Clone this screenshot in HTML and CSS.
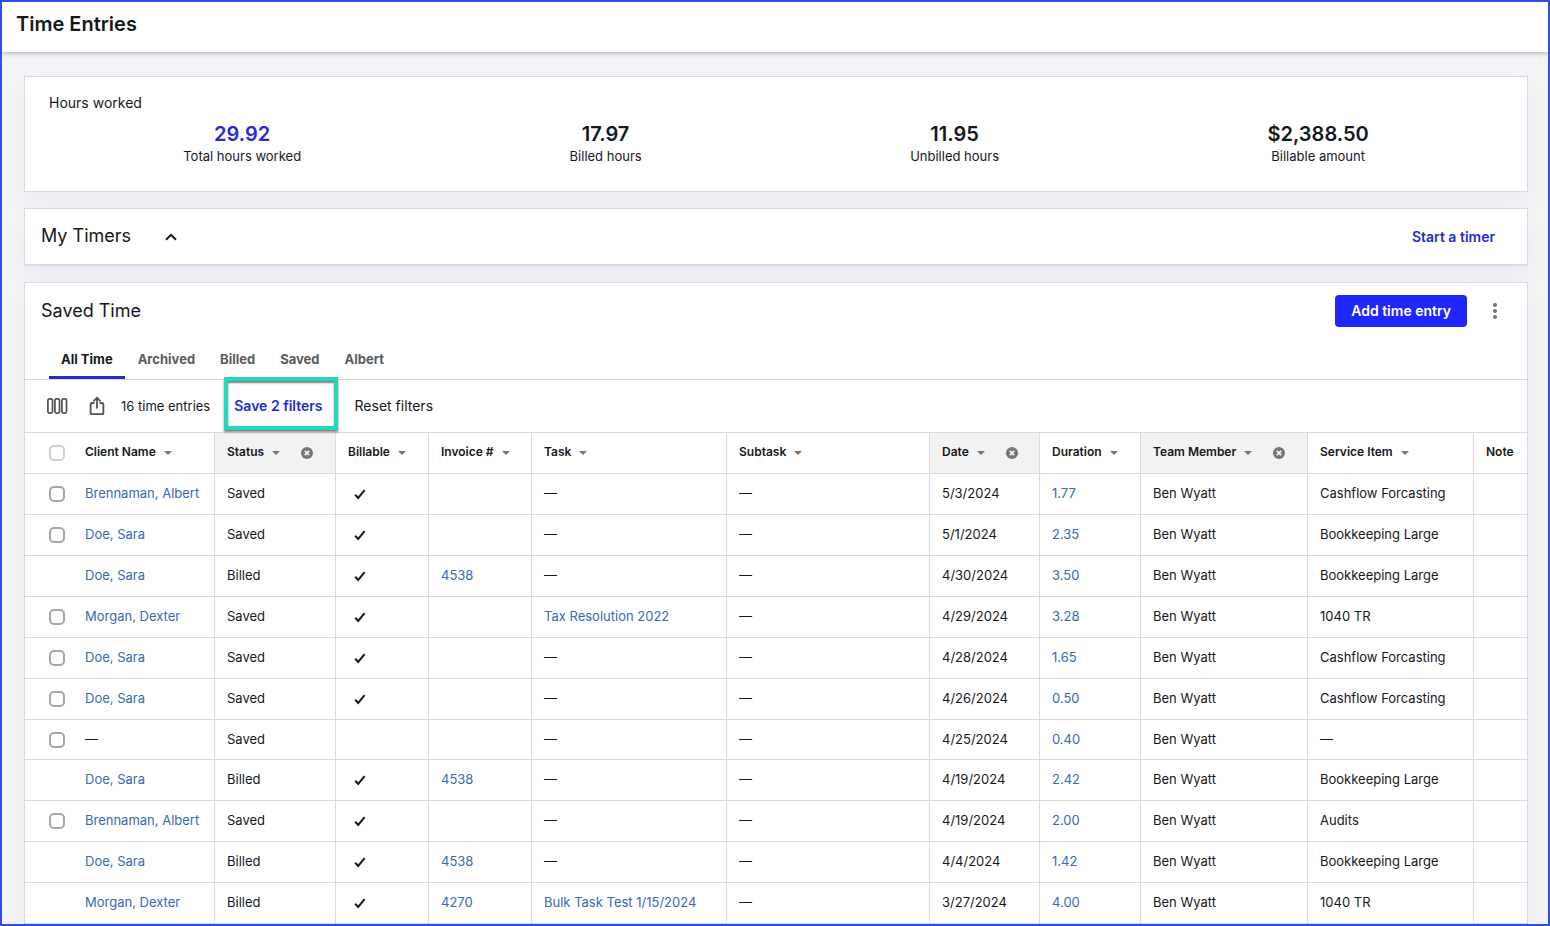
FILE: index.html
```html
<!DOCTYPE html>
<html lang="en">
<head>
<meta charset="utf-8">
<title>Time Entries</title>
<link rel="stylesheet" href="styles.css">
</head>
<body>
<svg class="sprite" aria-hidden="true">
  <symbol id="check" viewBox="0 0 12 12"><path d="M1.2 6.8 4.2 9.900 10.600 2.200" fill="none" stroke="currentColor" stroke-width="2"/></symbol>
  <symbol id="caret" viewBox="0 0 8 4"><path d="M0 0h8L4 4z" fill="currentColor"/></symbol>
  <symbol id="clear" viewBox="0 0 12 12"><circle cx="6" cy="6" r="6" fill="currentColor"/><path d="m3.8 3.8 4.4 4.4m0-4.4L3.8 8.2" stroke="#f2f2f2" stroke-width="1.8"/></symbol>
</svg>
<div class="app">
  <header class="topbar"><h1>Time Entries</h1></header>
  <main class="content">
    <section class="card summary">
      <h2 class="summary-title">Hours worked</h2>
      <div class="stats">
        <div class="stat"><strong class="stat-value accent">29.92</strong><span>Total hours worked</span></div>
        <div class="stat"><strong class="stat-value">17.97</strong><span>Billed hours</span></div>
        <div class="stat"><strong class="stat-value">11.95</strong><span>Unbilled hours</span></div>
        <div class="stat"><strong class="stat-value">$2,388.50</strong><span>Billable amount</span></div>
      </div>
    </section>

    <section class="card timers">
      <h2 class="card-title">My Timers</h2>
      <button class="icon-button toggle" aria-label="Collapse timers"><svg width="12" height="8" viewBox="0 0 12 8"><path d="M1 6.8 6 1.8l5 5" fill="none" stroke="currentColor" stroke-width="2"/></svg></button>
      <button class="text-button strong start">Start a timer</button>
    </section>

    <section class="card saved">
      <div class="saved-head">
        <h2 class="card-title">Saved Time</h2>
        <button class="primary-button">Add time entry</button>
        <button class="icon-button more" aria-label="More options"><svg width="6" height="18" viewBox="0 0 6 18"><g fill="currentColor"><circle cx="3" cy="3" r="2.1"/><circle cx="3" cy="9" r="2.1"/><circle cx="3" cy="15" r="2.1"/></g></svg></button>
      </div>
      <nav class="tabs">
        <button class="tab active">All Time</button>
        <button class="tab">Archived</button>
        <button class="tab">Billed</button>
        <button class="tab">Saved</button>
        <button class="tab">Albert</button>
      </nav>
      <div class="toolbar">
        <button class="icon-button" aria-label="Columns"><svg width="22" height="18" viewBox="0 0 22 18"><g fill="none" stroke="currentColor" stroke-width="1.7"><rect x="1.9" y="1.8" width="4.6" height="14.4" rx="1.6"/><rect x="8.9" y="1.8" width="4.6" height="14.4" rx="1.6"/><rect x="15.9" y="1.8" width="4.6" height="14.4" rx="1.6"/></g></svg></button>
        <button class="icon-button share" aria-label="Export"><svg width="16" height="20" viewBox="0 0 16 20"><path d="M5.4 7H3.2C2.2 7 1.6 7.600 1.6 8.500v7.900c0 1 .6 1.700 1.600 1.700h9.600c1 0 1.600-.7 1.600-1.700V8.500C14.400 7.600 13.800 7 12.800 7h-2.200M8 12.500V2M4.400 5.300 8 1.700l3.600 3.600" fill="none" stroke="currentColor" stroke-width="1.800"/></svg></button>
        <span class="count">16 time entries</span>
        <span class="callout"><button class="text-button strong">Save 2 filters</button></span>
        <button class="text-button">Reset filters</button>
      </div>
      <table class="entries">
        <colgroup><col class="c-client"><col class="c-status"><col class="c-billable"><col class="c-invoice"><col class="c-task"><col class="c-subtask"><col class="c-date"><col class="c-duration"><col class="c-member"><col class="c-service"><col></colgroup>
        <thead>
          <tr>
            <th><div class="th"><input class="box muted" type="checkbox" aria-label="Select all">Client Name<svg class="caret"><use href="#caret"/></svg></div></th>
            <th class="filtered"><div class="th">Status<svg class="caret"><use href="#caret"/></svg><button class="icon-button clear" aria-label="Clear status filter"><svg width="12" height="12"><use href="#clear"/></svg></button></div></th>
            <th><div class="th">Billable<svg class="caret"><use href="#caret"/></svg></div></th>
            <th><div class="th">Invoice #<svg class="caret"><use href="#caret"/></svg></div></th>
            <th><div class="th">Task<svg class="caret"><use href="#caret"/></svg></div></th>
            <th><div class="th">Subtask<svg class="caret"><use href="#caret"/></svg></div></th>
            <th class="filtered"><div class="th">Date<svg class="caret"><use href="#caret"/></svg><button class="icon-button clear" aria-label="Clear date filter"><svg width="12" height="12"><use href="#clear"/></svg></button></div></th>
            <th><div class="th">Duration<svg class="caret"><use href="#caret"/></svg></div></th>
            <th class="filtered"><div class="th">Team Member<svg class="caret"><use href="#caret"/></svg><button class="icon-button clear" aria-label="Clear team member filter"><svg width="12" height="12"><use href="#clear"/></svg></button></div></th>
            <th><div class="th">Service Item<svg class="caret"><use href="#caret"/></svg></div></th>
            <th><div class="th">Note</div></th>
          </tr>
        </thead>
        <tbody>
          <tr><td class="client"><div class="pick"><input class="box" type="checkbox" aria-label="Select entry"><a href="#">Brennaman, Albert</a></div></td><td>Saved</td><td><svg class="check"><use href="#check"/></svg></td><td></td><td>—</td><td>—</td><td>5/3/2024</td><td><a href="#">1.77</a></td><td>Ben Wyatt</td><td>Cashflow Forcasting</td><td></td></tr>
          <tr><td class="client"><div class="pick"><input class="box" type="checkbox" aria-label="Select entry"><a href="#">Doe, Sara</a></div></td><td>Saved</td><td><svg class="check"><use href="#check"/></svg></td><td></td><td>—</td><td>—</td><td>5/1/2024</td><td><a href="#">2.35</a></td><td>Ben Wyatt</td><td>Bookkeeping Large</td><td></td></tr>
          <tr><td class="client locked"><a href="#">Doe, Sara</a></td><td>Billed</td><td><svg class="check"><use href="#check"/></svg></td><td><a href="#">4538</a></td><td>—</td><td>—</td><td>4/30/2024</td><td><a href="#">3.50</a></td><td>Ben Wyatt</td><td>Bookkeeping Large</td><td></td></tr>
          <tr><td class="client"><div class="pick"><input class="box" type="checkbox" aria-label="Select entry"><a href="#">Morgan, Dexter</a></div></td><td>Saved</td><td><svg class="check"><use href="#check"/></svg></td><td></td><td><a href="#">Tax Resolution 2022</a></td><td>—</td><td>4/29/2024</td><td><a href="#">3.28</a></td><td>Ben Wyatt</td><td>1040 TR</td><td></td></tr>
          <tr><td class="client"><div class="pick"><input class="box" type="checkbox" aria-label="Select entry"><a href="#">Doe, Sara</a></div></td><td>Saved</td><td><svg class="check"><use href="#check"/></svg></td><td></td><td>—</td><td>—</td><td>4/28/2024</td><td><a href="#">1.65</a></td><td>Ben Wyatt</td><td>Cashflow Forcasting</td><td></td></tr>
          <tr><td class="client"><div class="pick"><input class="box" type="checkbox" aria-label="Select entry"><a href="#">Doe, Sara</a></div></td><td>Saved</td><td><svg class="check"><use href="#check"/></svg></td><td></td><td>—</td><td>—</td><td>4/26/2024</td><td><a href="#">0.50</a></td><td>Ben Wyatt</td><td>Cashflow Forcasting</td><td></td></tr>
          <tr class="non-billable"><td class="client"><div class="pick"><input class="box" type="checkbox" aria-label="Select entry">—</div></td><td>Saved</td><td></td><td></td><td>—</td><td>—</td><td>4/25/2024</td><td><a href="#">0.40</a></td><td>Ben Wyatt</td><td>—</td><td></td></tr>
          <tr><td class="client locked"><a href="#">Doe, Sara</a></td><td>Billed</td><td><svg class="check"><use href="#check"/></svg></td><td><a href="#">4538</a></td><td>—</td><td>—</td><td>4/19/2024</td><td><a href="#">2.42</a></td><td>Ben Wyatt</td><td>Bookkeeping Large</td><td></td></tr>
          <tr><td class="client"><div class="pick"><input class="box" type="checkbox" aria-label="Select entry"><a href="#">Brennaman, Albert</a></div></td><td>Saved</td><td><svg class="check"><use href="#check"/></svg></td><td></td><td>—</td><td>—</td><td>4/19/2024</td><td><a href="#">2.00</a></td><td>Ben Wyatt</td><td>Audits</td><td></td></tr>
          <tr><td class="client locked"><a href="#">Doe, Sara</a></td><td>Billed</td><td><svg class="check"><use href="#check"/></svg></td><td><a href="#">4538</a></td><td>—</td><td>—</td><td>4/4/2024</td><td><a href="#">1.42</a></td><td>Ben Wyatt</td><td>Bookkeeping Large</td><td></td></tr>
          <tr><td class="client locked"><a href="#">Morgan, Dexter</a></td><td>Billed</td><td><svg class="check"><use href="#check"/></svg></td><td><a href="#">4270</a></td><td><a href="#">Bulk Task Test 1/15/2024</a></td><td>—</td><td>3/27/2024</td><td><a href="#">4.00</a></td><td>Ben Wyatt</td><td>1040 TR</td><td></td></tr>
        </tbody>
      </table>
    </section>
  </main>
</div>
</body>
</html>
```
FILE: styles.css
```css
:root {
  --ink: #14181d;
  --accent: #242bd0;
  --link: #3a68b4;
  --line: #dadadd;
  --icon: #757575;
}
* { box-sizing: border-box; }
body {
  margin: 0;
  font: 13px/16px Inter, "Liberation Sans", sans-serif;
  color: var(--ink);
}
h1, h2 { margin: 0; font-weight: 400; }
button {
  margin: 0;
  padding: 0;
  border: 0;
  background: none;
  font: inherit;
  color: inherit;
}
a { color: var(--link); text-decoration: none; }
.sprite { display: none; }
svg { display: block; flex: none; }

.app {
  height: 100vh;
  overflow: hidden;
  border: 2px solid #2f4de8;
  background: #f3f4f8;
}
.topbar {
  position: relative;
  padding: 10px 14px 16px;
  background: #fff;
  box-shadow: 0 1px 5px rgba(0, 0, 0, .3);
}
.topbar h1 { font-size: 20px; line-height: 24px; font-weight: 600; }
.content {
  display: flex;
  flex-direction: column;
  gap: 16px;
  padding: 24px 20px 0 22px;
}
.card {
  border: 1px solid var(--line);
  background: #fff;
  box-shadow: 0 12px 24px rgba(30, 30, 70, .04);
}
.card-title { font-size: 18px; line-height: 24px; }

.summary { padding: 18px 24px 27px; }
.summary-title { font-size: 14px; line-height: 16px; }
.stats { display: flex; justify-content: space-around; padding-top: 9px; }
.stat { display: flex; flex-direction: column; align-items: center; }
.stat-value { font-size: 20px; line-height: 28px; font-weight: 600; }
.accent { color: var(--accent); }

.timers {
  display: flex;
  align-items: center;
  padding: 15px 32px 16px 16px;
  border-bottom-width: 2px;
}
.icon-button { display: flex; color: #505255; }
.toggle { margin: 2px 0 0 34px; color: var(--ink); }
.text-button { font-size: 14px; font-weight: 400; }
.strong { font-weight: 600; color: var(--accent); }
.start { margin: 2px 0 0 auto; }

.saved-head { display: flex; align-items: center; padding: 12px 29px 0 16px; }
.primary-button {
  margin-left: auto;
  padding: 8px 16px;
  border-radius: 4px;
  background: #1f27fb;
  color: #fff;
  font-size: 14px;
  font-weight: 600;
}
.more { margin-left: 25px; color: var(--icon); }

.tabs { display: flex; gap: 1px; padding: 12px 24px 0; border-bottom: 1px solid var(--line); }
.tab {
  padding: 12px 12px 9px;
  border-bottom: 3px solid transparent;
  color: #5a5b5e;
  font-weight: 700;
}
.tab.active { color: var(--ink); border-color: var(--accent); }

.toolbar { display: flex; align-items: center; height: 52px; padding-left: 21px; }
.share { margin-left: 21px; }
.count { margin-left: 16px; }
.callout { position: relative; margin: 0 32px 0 24px; }
.callout::after {
  content: "";
  position: absolute;
  inset: -21px -15px -16px -10px;
  border: 4px solid #22d9bf;
  box-shadow: 0 2px 2px rgba(0, 0, 0, .5), inset 0 2px 2px rgba(0, 0, 0, .5);
  pointer-events: none;
}

.entries {
  width: 100%;
  table-layout: fixed;
  border-spacing: 0;
  border-top: 1px solid var(--line);
}
.c-client { width: 190px; }
.c-status { width: 121px; }
.c-billable { width: 93px; }
.c-invoice { width: 103px; }
.c-task { width: 195px; }
.c-subtask { width: 203px; }
.c-date { width: 110px; }
.c-duration { width: 101px; }
.c-member { width: 167px; }
.c-service { width: 166px; }
th, td {
  height: 41px;
  padding: 0 12px 2px;
  border: 0 solid var(--line);
  border-width: 0 1px 1px 0;
  text-align: left;
  white-space: nowrap;
}
th:last-child, td:last-child { border-right: 0; }
th { font-size: 12px; font-weight: 600; }
.filtered { background: #f2f2f2; }
.th, .pick { display: flex; align-items: center; height: 16px; }
th:first-child, .client { padding-left: 24px; }
td.locked { padding-left: 60px; }
.non-billable td { height: 40px; }
.caret { width: 8px; height: 4px; margin: 2px 0 0 8px; color: var(--icon); }
.clear { margin: 2px 0 0 21px; color: var(--icon); }
.check { width: 12px; height: 12px; margin: 2px 0 0 6px; }
.box {
  appearance: none;
  flex: none;
  width: 16px;
  height: 16px;
  margin: 2px 20px 0 0;
  border: 2px solid #a6a6a6;
  border-radius: 5px;
  background: #fff;
}
.box.muted { border-color: #d0d0d0; }
```
